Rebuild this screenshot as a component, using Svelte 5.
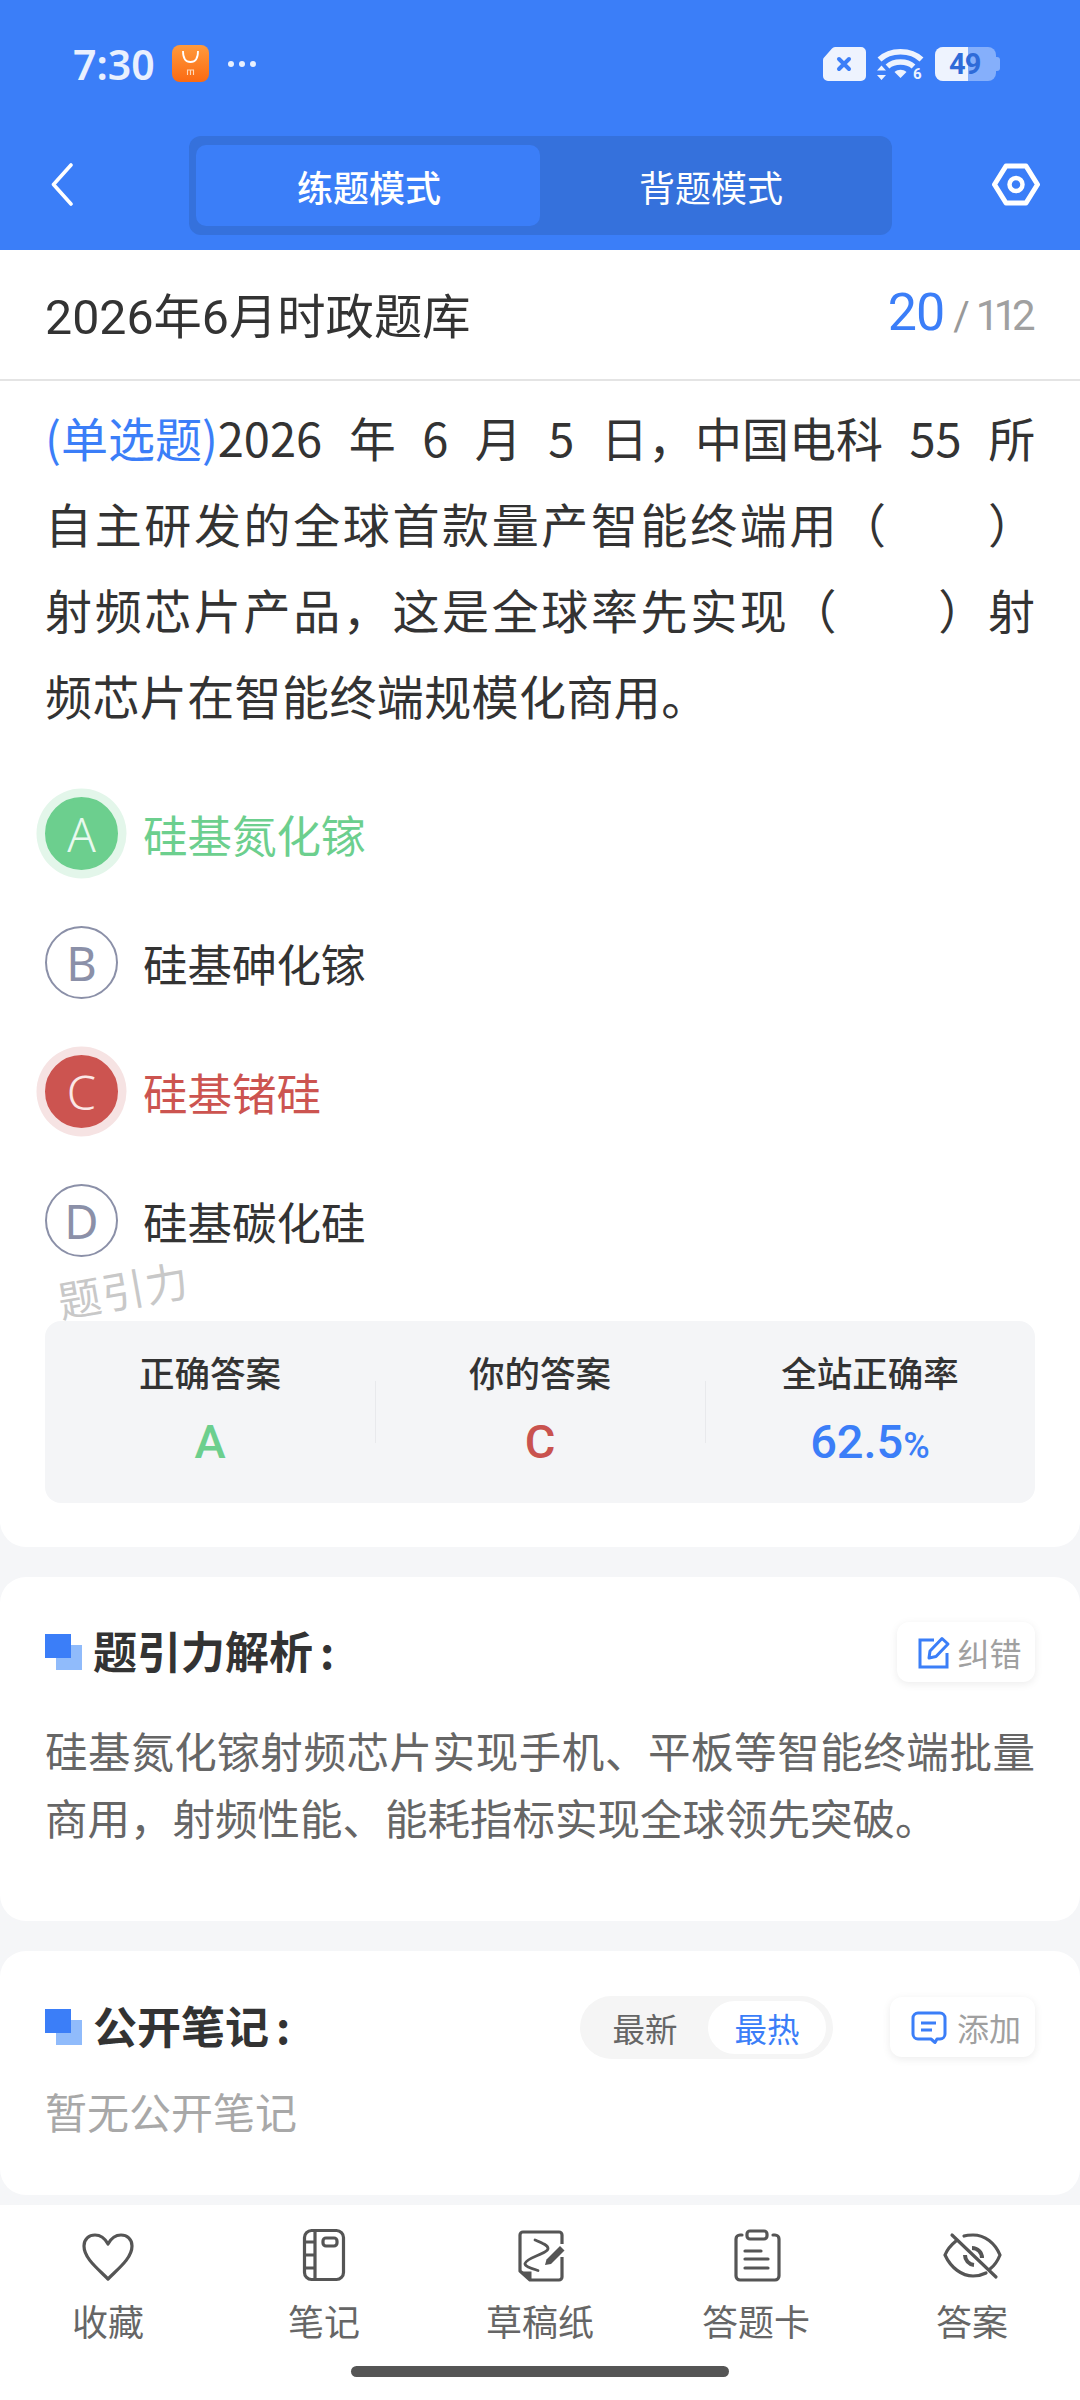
<script>
	const options = [
		{ key: 'A', text: '硅基氮化镓', state: 'right' },
		{ key: 'B', text: '硅基砷化镓', state: '' },
		{ key: 'C', text: '硅基锗硅', state: 'wrong' },
		{ key: 'D', text: '硅基碳化硅', state: '' }
	];
</script>

<div class="page">
	<header class="head">
		<div class="status">
			<span class="time">7:30</span>
			<svg class="appicon" width="37" height="37" viewBox="0 0 37 37">
				<defs>
					<linearGradient id="og" x1="0" y1="0" x2="0" y2="1">
						<stop offset="0" stop-color="#ff9a3c" />
						<stop offset="1" stop-color="#fb6a12" />
					</linearGradient>
				</defs>
				<rect width="37" height="37" rx="8" fill="url(#og)" />
				<path d="M11 6c0 8 3 11 7.500 11s7.500-3 7.500-11" fill="none" stroke="#fff" stroke-width="1.800" />
				<path d="M15.500 30v-5h6v5M18.500 25v5" fill="none" stroke="#ffd9b8" stroke-width="1.100" />
			</svg>
			<span class="dots"><i></i><i></i><i></i></span>
			<span class="sys">
				<svg width="43" height="34" viewBox="0 0 43 34">
					<path d="M12 0h26a5 5 0 0 1 5 5v24a5 5 0 0 1-5 5H5a5 5 0 0 1-5-5V13a4 4 0 0 1 1.500-3L9 1.500A4 4 0 0 1 12 0z" fill="#eef3fe" />
					<path d="M16 12l10 10M26 12L16 22" stroke="#3b7ef8" stroke-width="4" stroke-linecap="round" />
				</svg>
				<svg class="wifi" width="47" height="35" viewBox="0 0 47 35">
					<path d="M2.500 13.500C13 3 34 3 44.500 13.500" fill="none" stroke="#eef3fe" stroke-width="5.500" />
					<path d="M10.500 20.500C17 14.500 30 14.500 36.500 20.500" fill="none" stroke="#eef3fe" stroke-width="5.500" />
					<path d="M17.500 26c3.500-3 8.500-3 12 0l-6 6z" fill="#eef3fe" />
					<path d="M4.500 19.500l4.500 5H0zM4.500 34l4.500-5H0z" fill="#eef3fe" />
					<text x="36" y="33" class="six">6</text>
				</svg>
				<span class="batt">
					<span class="fill"></span>
					<span class="tip"></span>
					<span class="pct">49</span>
				</span>
			</span>
		</div>
		<div class="bar">
			<svg class="back" width="22" height="43" viewBox="0 0 22 43">
				<path d="M20 2L2.500 21.500 20 41" fill="none" stroke="#fff" stroke-width="3.600" stroke-linecap="round" stroke-linejoin="round" />
			</svg>
			<div class="tabs">
				<span class="tab on">练题模式</span>
				<span class="tab off">背题模式</span>
			</div>
			<svg class="hex" width="48" height="43" viewBox="0 0 48 43">
				<path d="M14 3h20l11.500 18.500L34 40H14L2.500 21.500z" fill="none" stroke="#fff" stroke-width="5" stroke-linejoin="round" />
				<circle cx="24" cy="21.500" r="6.500" fill="none" stroke="#fff" stroke-width="4.500" />
			</svg>
		</div>
	</header>

	<section class="main">
		<div class="titlerow">
			<span class="bank">2026年6月时政题库</span>
			<span class="count"><b>20</b><em>/</em><span>112</span></span>
		</div>
		<p class="question">
			<span class="line first"><span class="qtype">(单选题)</span>2026 年 6 月 5 日，中国电科 55 所</span>
			<span class="line">自主研发的全球首款量产智能终端用（　　）</span>
			<span class="line">射频芯片产品，这是全球率先实现（　　）射</span>
			<span class="line last">频芯片在智能终端规模化商用。</span>
		</p>
		<div class="options">
			{#each options as o}
				<div class="option {o.state}">
					<span class="letter">{o.key}</span>
					<span class="otext">{o.text}</span>
				</div>
			{/each}
			<span class="mark">题引力</span>
		</div>
		<div class="stats">
			<div class="stat"><span class="lab">正确答案</span><span class="val green">A</span></div>
			<div class="stat"><span class="lab">你的答案</span><span class="val red">C</span></div>
			<div class="stat"><span class="lab">全站正确率</span><span class="val blue">62.5<small>%</small></span></div>
		</div>
	</section>

	<section class="card analysis">
		<div class="cardhead">
			<span class="squares"></span>
			<h2>题引力解析<i>:</i></h2>
			<span class="pill fix">
				<svg width="33" height="33" viewBox="0 0 33 33">
					<path d="M16 4H2v27h27V17" fill="none" stroke="#3b7ef8" stroke-width="3" />
					<path d="M11 22l1-7L24 2.500l6 5.500-12 12.500z" fill="none" stroke="#3b7ef8" stroke-width="3" stroke-linejoin="round" />
				</svg>
				纠错
			</span>
		</div>
		<p class="explain">硅基氮化镓射频芯片实现手机、平板等智能终端批量商用，射频性能、能耗指标实现全球领先突破。</p>
	</section>

	<section class="card notes">
		<div class="cardhead">
			<span class="squares"></span>
			<h2>公开笔记<i>:</i></h2>
			<div class="toggle">
				<span>最新</span>
				<span class="active">最热</span>
			</div>
			<span class="pill add">
				<svg width="36" height="33" viewBox="0 0 36 33">
					<path d="M7 2h22a5 5 0 0 1 5 5v16a5 5 0 0 1-5 5h-3l-2 3.500-4-3.500H7a5 5 0 0 1-5-5V7a5 5 0 0 1 5-5z" fill="none" stroke="#3b7ef8" stroke-width="3" stroke-linejoin="round" />
					<path d="M10 12h15M10 19h11" stroke="#3b7ef8" stroke-width="3" />
				</svg>
				添加
			</span>
		</div>
		<p class="empty">暂无公开笔记</p>
	</section>

	<nav class="nav">
		<div class="item">
			<svg width="60" height="54" viewBox="0 0 60 54">
				<path d="M30 51C19 40 6 30 6 18 6 11 11 7 17 7c5.500 0 10 3.500 13 9 3-5.500 7.500-9 13-9 6 0 11 4 11 11 0 12-13 22-24 33z" fill="none" stroke="#555" stroke-width="3.200" stroke-linejoin="round" />
			</svg>
			<span>收藏</span>
		</div>
		<div class="item">
			<svg width="60" height="54" viewBox="0 0 60 54">
				<rect x="10.500" y="2.500" width="39" height="49" rx="7" fill="none" stroke="#555" stroke-width="3.200" />
				<path d="M21 2.500v49M10.500 14h10.500M10.500 27h10.500M10.500 40h10.500" fill="none" stroke="#555" stroke-width="3.200" />
				<rect x="29" y="10" width="14" height="8" rx="3" fill="none" stroke="#555" stroke-width="3.200" />
			</svg>
			<span>笔记</span>
		</div>
		<div class="item">
			<svg width="60" height="54" viewBox="0 0 60 54">
				<path d="M52 16V7a3 3 0 0 0-3-3H13a3 3 0 0 0-3 3v36l10 9h29a3 3 0 0 0 3-3V29" fill="none" stroke="#555" stroke-width="3.200" stroke-linejoin="round" />
				<path d="M11.500 43.500h10V52z" fill="#555" />
				<path d="M25 12c6 2.500 13 5 13 8.500 0 5-22 9-23 15-.5 3 7 5 13 7" fill="none" stroke="#555" stroke-width="2.800" stroke-linecap="round" />
				<path d="M35 37l1.500-5.500L50 18l4.500 4.500L41 36z" fill="#555" />
			</svg>
			<span>草稿纸</span>
		</div>
		<div class="item">
			<svg width="60" height="54" viewBox="0 0 60 54">
				<path d="M16 7h-2a4 4 0 0 0-4 4v37a4 4 0 0 0 4 4h35a4 4 0 0 0 4-4V11a4 4 0 0 0-4-4h-2" fill="none" stroke="#555" stroke-width="3.200" stroke-linecap="round" />
				<rect x="21" y="3" width="20" height="8" rx="3" fill="none" stroke="#555" stroke-width="3.200" />
				<path d="M19 23h16M19 31h23M19 40h23" fill="none" stroke="#555" stroke-width="3.200" stroke-linecap="round" />
			</svg>
			<span>答题卡</span>
		</div>
		<div class="item">
			<svg width="60" height="54" viewBox="0 0 60 54">
				<path d="M14 13C9 17 5 22 3 27c6 13 17 21 28 21 5 0 9-1 13-3M22 8c3-1 6-1 9-1 12 0 22 8 27 20-2 5-6 11-10 14" fill="none" stroke="#555" stroke-width="3.200" stroke-linecap="round" />
				<path d="M30 20a10 10 0 0 1 10 10M23 27a10 10 0 0 0 9 10" fill="none" stroke="#555" stroke-width="4" />
				<path d="M10 7l44 42" stroke="#555" stroke-width="3.200" stroke-linecap="round" />
			</svg>
			<span>答案</span>
		</div>
	</nav>
	<div class="homebar"><span></span></div>
</div>

<style>
	:global(body) {
		margin: 0;
		background: #f5f6f8;
	}
	.page {
		width: 1080px;
		height: 2400px;
		overflow: hidden;
		background: #f5f6f8;
		font-family: Roboto, 'Noto Sans CJK SC', sans-serif;
		color: #333;
	}
	.head {
		height: 250px;
		background: #3b7ef8;
		box-sizing: border-box;
		padding-top: 45px;
	}
	.status {
		display: flex;
		align-items: center;
		height: 37px;
		padding: 0 80px 0 73px;
	}
	.time {
		font-size: 41px;
		font-weight: 600;
		color: #e9f0fe;
		width: 99px;
		font-family: 'Noto Sans', sans-serif;
	}
	.appicon {
		display: block;
	}
	.dots {
		display: flex;
		gap: 5px;
		margin-left: 19px;
	}
	.dots i {
		width: 6px;
		height: 6px;
		border-radius: 50%;
		background: #e9f0fe;
	}
	.sys {
		margin-left: auto;
		display: flex;
		align-items: center;
		gap: 11px;
	}
	.wifi {
		overflow: visible;
	}
	.six {
		font: 700 15px Roboto, sans-serif;
		fill: #eef3fe;
	}
	.batt {
		position: relative;
		width: 61px;
		height: 34px;
		background: rgba(255, 255, 255, 0.38);
		border-radius: 8px;
		margin-right: 4px;
	}
	.fill {
		position: absolute;
		left: 0;
		top: 0;
		bottom: 0;
		width: 33px;
		background: #eef3fe;
		border-radius: 8px 0 0 8px;
	}
	.tip {
		position: absolute;
		right: -4px;
		top: 10px;
		width: 4px;
		height: 14px;
		background: rgba(255, 255, 255, 0.38);
		border-radius: 0 3px 3px 0;
	}
	.pct {
		position: absolute;
		left: 14px;
		top: 0;
		line-height: 34px;
		font-size: 29px;
		font-weight: 700;
		letter-spacing: -1px;
		color: #2f6bd8;
	}
	.bar {
		position: relative;
		display: flex;
		align-items: center;
		justify-content: center;
		height: 99px;
		margin-top: 54px;
	}
	.back {
		position: absolute;
		left: 51px;
		top: 27px;
	}
	.hex {
		position: absolute;
		left: 992px;
		top: 27px;
	}
	.tabs {
		display: flex;
		box-sizing: border-box;
		width: 703px;
		height: 99px;
		padding: 9px 7px;
		border-radius: 12px;
		background: #3571dc;
		margin-left: 1px;
	}
	.tab {
		flex: 1;
		display: flex;
		align-items: center;
		justify-content: center;
		border-radius: 10px;
		font-size: 36px;
		color: #fff;
		font-family: 'Noto Sans CJK SC', sans-serif;
	}
	.tab.on {
		background: #3b7ef8;
		font-weight: 500;
		padding-left: 2px;
	}
	.tab.off {
		padding-right: 3px;
	}
	.main {
		background: #fff;
		border-radius: 0 0 26px 26px;
		height: 1297px;
		box-sizing: border-box;
	}
	.titlerow {
		display: flex;
		align-items: center;
		justify-content: space-between;
		box-sizing: border-box;
		height: 131px;
		padding: 0 45px 4px;
		border-bottom: 2px solid #e4e4e4;
	}
	.bank {
		font-size: 48.300px;
		color: #333;
	}
	.count {
		display: flex;
		align-items: baseline;
	}
	.count b {
		font-size: 52px;
		font-weight: 400;
		color: #3b7ef8;
		letter-spacing: -1px;
	}
	.count em {
		font-style: normal;
		font-size: 40px;
		color: #999;
		margin: 0 6px 0 9px;
	}
	.count span {
		font-size: 42px;
		color: #a0a0a0;
		letter-spacing: -5.500px;
		margin-right: 5px;
	}
	.question {
		margin: 13px 45px 0;
		font-size: 47px;
		line-height: 86px;
		color: #333;
		font-family: 'Noto Sans CJK SC', sans-serif;
	}
	.line {
		display: block;
		text-align: justify;
		text-align-last: justify;
		white-space: nowrap;
	}
	.line.first {
		text-align: left;
		text-align-last: left;
		word-spacing: 16px;
	}
	.line.last {
		text-align: left;
		text-align-last: left;
		letter-spacing: 0.4px;
	}
	.qtype {
		color: #3b7ef8;
	}
	.options {
		position: relative;
		margin: 59px 0 0;
		display: flex;
		flex-direction: column;
		gap: 56px;
		padding-left: 45px;
	}
	.option {
		display: flex;
		align-items: center;
		gap: 25px;
		height: 73px;
		font-family: 'Noto Sans CJK SC', sans-serif;
	}
	.letter {
		box-sizing: border-box;
		width: 73px;
		height: 73px;
		border-radius: 50%;
		border: 2px solid #8b90a8;
		display: flex;
		align-items: center;
		justify-content: center;
		font-family: 'Noto Sans', sans-serif;
		font-weight: 400;
		font-size: 47px;
		color: #8b90a8;
	}
	.otext {
		font-size: 44.500px;
		color: #333;
	}
	.right .letter {
		background: #6ccf8e;
		border-color: #6ccf8e;
		color: #e8f9ee;
		font-weight: 300;
		box-shadow: 0 0 0 8.500px #e3f6ea;
	}
	.right .otext {
		color: #6ccf8e;
	}
	.wrong .letter {
		background: #cc5450;
		border-color: #cc5450;
		color: #fbe7e6;
		font-weight: 300;
		box-shadow: 0 0 0 8.500px #f6e3e3;
	}
	.wrong .otext {
		color: #cc5450;
	}
	.mark {
		position: absolute;
		left: 57px;
		bottom: -62px;
		font-size: 43px;
		color: #c8c8c8;
		letter-spacing: 1px;
		transform: rotate(-10deg);
		font-family: 'Noto Sans CJK SC', sans-serif;
	}
	.stats {
		display: flex;
		margin: 64px 45px 0;
		height: 182px;
		border-radius: 16px;
		background: #f4f5f7;
	}
	.stat {
		position: relative;
		flex: 1;
		display: flex;
		flex-direction: column;
		align-items: center;
		padding-top: 28px;
	}
	.stat + .stat::before {
		content: '';
		position: absolute;
		left: 0;
		top: 60px;
		height: 62px;
		width: 1px;
		background: #e8e9ec;
	}
	.lab {
		font-size: 35.500px;
		font-weight: 500;
		line-height: 46px;
		color: #333;
		font-family: 'Noto Sans CJK SC', sans-serif;
	}
	.val {
		font-size: 47px;
		font-weight: 500;
		line-height: 70px;
		margin-top: 12px;
	}
	.val small {
		font-size: 36px;
	}
	.green {
		color: #6ccf8e;
	}
	.red {
		color: #c9534f;
	}
	.blue {
		color: #3b7ef8;
	}
	.card {
		background: #fff;
		border-radius: 26px;
		margin-top: 30px;
		box-sizing: border-box;
	}
	.analysis {
		height: 344px;
		padding-top: 45px;
	}
	.notes {
		height: 244px;
		padding-top: 45px;
	}
	.cardhead {
		display: flex;
		align-items: center;
		height: 60px;
		padding: 0 45px;
	}
	.notes .cardhead {
		height: 62px;
	}
	.squares {
		position: relative;
		width: 37px;
		height: 36px;
		flex: none;
		margin-right: 11px;
	}
	.squares::before {
		content: '';
		position: absolute;
		left: 11px;
		top: 11px;
		width: 26px;
		height: 25px;
		background: #90bbfb;
	}
	.squares::after {
		content: '';
		position: absolute;
		left: 0;
		top: 0;
		width: 26px;
		height: 24px;
		background: #3b7ef8;
	}
	h2 {
		margin: -4px 0 0;
		font-size: 44px;
		font-weight: 700;
		color: #333;
		font-family: 'Noto Sans CJK SC', sans-serif;
	}
	h2 i {
		font-style: normal;
		margin-left: 7px;
	}
	.pill {
		display: flex;
		align-items: center;
		justify-content: center;
		box-sizing: border-box;
		height: 60px;
		border-radius: 12px;
		background: #fff;
		box-shadow: 0 2px 8px rgba(0, 0, 0, 0.08);
		font-size: 32px;
		color: #a0a0a0;
		font-family: 'Noto Sans CJK SC', sans-serif;
	}
	.fix {
		width: 138px;
		gap: 6px;
		margin-left: auto;
		padding-left: 8px;
	}
	.add {
		width: 145px;
		gap: 10px;
		margin-left: 57px;
		padding-left: 7px;
	}
	.toggle {
		display: flex;
		box-sizing: border-box;
		width: 253px;
		height: 63px;
		padding: 5px 7px 5px 2px;
		margin-left: auto;
		border-radius: 32px;
		background: #f5f5f5;
		font-size: 32.500px;
		font-family: 'Noto Sans CJK SC', sans-serif;
		color: #666;
	}
	.toggle span {
		display: flex;
		align-items: center;
		justify-content: center;
		width: 126px;
		border-radius: 27px;
	}
	.toggle .active {
		width: 118px;
		background: #fff;
		color: #3b7ef8;
	}
	.explain {
		margin: 34px 45px 0;
		font-size: 42.500px;
		line-height: 67px;
		color: #666;
		text-align: justify;
		font-family: 'Noto Sans CJK SC', sans-serif;
	}
	.empty {
		margin: 23px 45px 0;
		font-size: 42px;
		line-height: 60px;
		color: #a8a8a8;
		font-family: 'Noto Sans CJK SC', sans-serif;
	}
	.nav {
		display: grid;
		grid-template-columns: repeat(5, 216px);
		margin-top: 10px;
		height: 155px;
		background: #fff;
		box-sizing: border-box;
		padding-top: 23px;
	}
	.item {
		display: flex;
		flex-direction: column;
		align-items: center;
		gap: 14px;
		font-size: 36px;
		line-height: 48px;
		color: #666;
		font-family: 'Noto Sans CJK SC', sans-serif;
	}
	.homebar {
		height: 40px;
		background: #fff;
		display: flex;
		justify-content: center;
		padding-top: 6px;
	}
	.homebar span {
		width: 378px;
		height: 11px;
		border-radius: 6px;
		background: #555;
	}
</style>
